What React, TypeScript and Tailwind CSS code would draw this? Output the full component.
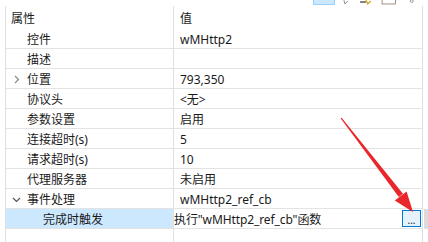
import React from "react";

type Row = {
  label: string;
  value?: string;
  indent: number;
  chevron?: "right" | "down";
  selected?: boolean;
};

const rows: Row[] = [
  { label: "控件", value: "wMHttp2", indent: 1 },
  { label: "描述", value: "", indent: 1 },
  { label: "位置", value: "793,350", indent: 1, chevron: "right" },
  { label: "协议头", value: "<无>", indent: 1 },
  { label: "参数设置", value: "启用", indent: 1 },
  { label: "连接超时(s)", value: "5", indent: 1 },
  { label: "请求超时(s)", value: "10", indent: 1 },
  { label: "代理服务器", value: "未启用", indent: 1 },
  { label: "事件处理", value: "wMHttp2_ref_cb", indent: 1, chevron: "down" },
  { label: "完成时触发", value: '执行"wMHttp2_ref_cb"函数', indent: 2, selected: true },
];

function Chevron({ dir }: { dir: "right" | "down" }) {
  if (dir === "right")
    return (
      <svg width="6" height="9" viewBox="0 0 6 9" className="absolute left-[8px] top-[6px]">
        <path d="M1 1 L4.5 4.5 L1 8" fill="none" stroke="#8a8a8a" strokeWidth="1.2" />
      </svg>
    );
  return (
    <svg width="9" height="6" viewBox="0 0 9 6" className="absolute left-[6px] top-[8px]">
      <path d="M1 1 L4.5 4.5 L8 1" fill="none" stroke="#555" strokeWidth="1.2" />
    </svg>
  );
}

function Toolbar() {
  return (
    <div className="flex h-[6px] items-start overflow-hidden">
      <div className="ml-[313px] h-[5px] w-[23px] border-x border-b border-[#99d1ff] bg-[#cce8ff]" />
      <svg width="90" height="6" viewBox="0 0 90 6" className="ml-[7px]">
        <path d="M2 0 L3 4 L6 1" fill="none" stroke="#8a8a8a" strokeWidth="1" />
        <rect x="19" y="1" width="6" height="2" fill="#7a7a7a" />
        <path d="M25 0 L27 4 L30 1" fill="none" stroke="#d9a21b" strokeWidth="1.4" />
        <rect x="42" y="-1" width="14" height="5" fill="none" stroke="#9a8f7a" strokeWidth="1" />
        <circle cx="73" cy="1" r="1.5" fill="none" stroke="#999" strokeWidth="1" />
      </svg>
    </div>
  );
}

export default function App() {
  return (
    <div
      className="relative flex h-[242px] w-[428px] flex-col overflow-hidden bg-white text-[12px] text-[#1a1a1a]"
      style={{ fontFamily: '"Noto Sans", "Noto Sans CJK SC", sans-serif' }}
    >
      <Toolbar />
      <div className="ml-[5px] mr-[5px] flex flex-1 flex-col border-l border-r border-[#e0e0e0]">
        <div className="flex h-[23px] items-center pt-[3px]">
          <div className="w-[167px] pl-[5px] leading-none">属性</div>
          <div className="-mt-[3px] flex h-[23px] flex-1 items-center border-l border-[#e0e0e0] pl-[6px] pt-[3px] leading-none">值</div>
        </div>
        {rows.map((r) => (
          <div key={r.label} className="flex h-[20px] border-b border-[#e3e3e3]">
            <div
              className={`relative flex w-[167px] items-center pt-[2px] leading-none ${
                r.selected ? "bg-[#cce8ff]" : ""
              } ${r.indent === 2 ? "pl-[37px]" : "pl-[21px]"}`}
            >
              {r.chevron && <Chevron dir={r.chevron} />}
              {r.label}
            </div>
            <div
              className={`flex flex-1 items-center border-l border-[#e0e0e0] leading-none ${
                r.selected ? "pl-0 pr-[1px]" : "pl-[6px]"
              }`}
            >
              <span
                className={`flex-1 whitespace-nowrap pt-[2px] ${r.selected ? "tracking-[-0.1px]" : ""}`}
              >
                {r.value}
              </span>
              {r.selected && (
                <div className="flex h-[17px] w-[19px] items-end justify-center border border-[#0078d7] bg-[#e5f1fb] pb-[1px] text-[10px] leading-none text-[#222]">
                  ...
                </div>
              )}
            </div>
          </div>
        ))}
        <div className="flex flex-1">
          <div className="w-[167px]" />
          <div className="flex-1 border-l border-[#e0e0e0]" />
        </div>
      </div>
      <div className="absolute right-0 top-[209px] h-[20px] w-[4px] bg-[#dcdcdc]" />
      <svg
        width="428"
        height="242"
        viewBox="0 0 428 242"
        className="pointer-events-none absolute left-0 top-0"
      >
        <polygon points="340.6,118.3 341.6,117.7 403,193.8 398.8,197" fill="#e8262b" />
        <polygon points="413,212 394.8,200.6 406.6,191.6" fill="#e8262b" />
      </svg>
    </div>
  );
}
